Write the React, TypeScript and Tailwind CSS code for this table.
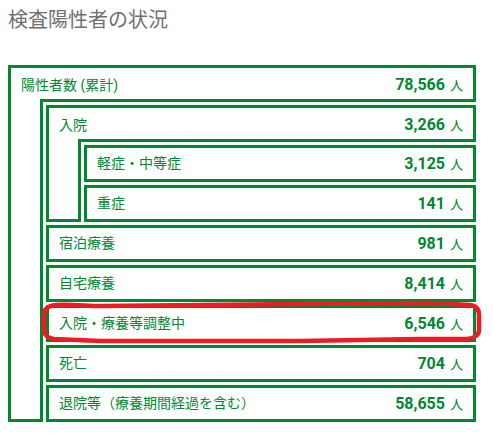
import React from 'react';

const font = { fontFamily: 'Roboto, "Noto Sans CJK JP", sans-serif' };

function Value({ n }: { n: string }) {
  return (
    <span className="flex items-baseline text-[#008830]">
      <strong className="text-[16px] font-bold">{n}</strong>
      <span className="ml-[5px] text-[13px]">人</span>
    </span>
  );
}

function Row({ label, n }: { label: string; n: string }) {
  return (
    <div className="flex h-[37px] items-center justify-between border-[3px] border-[#008830] pl-[10px] pr-[10px]">
      <span className="text-[14px] text-[#008830]">{label}</span>
      <Value n={n} />
    </div>
  );
}

function Group({ label, n, children }: { label: string; n: string; children: React.ReactNode }) {
  return (
    <div>
      <div className="flex h-[34px] items-center justify-between border-[3px] border-b-0 border-[#008830] pl-[10px] pr-[10px] pt-[3px]">
        <span className="text-[14px] text-[#008830]">{label}</span>
        <Value n={n} />
      </div>
      <div className="flex">
        <div className="w-[35px] shrink-0 border-[3px] border-t-0 border-[#008830]" />
        <div className="flex min-w-0 flex-1 flex-col gap-[3px] border-t-[3px] border-[#008830] pl-[3px] pt-[3px]">
          {children}
        </div>
      </div>
    </div>
  );
}

export default function App() {
  return (
    <div className="relative h-[436px] w-[493px] bg-white pl-2" style={font}>
      <h2 className="pt-[5px] text-[20px] leading-[30px] font-normal text-[#707070]">検査陽性者の状況</h2>
      <div className="mt-[30px] w-[468px]">
        <Group label="陽性者数 (累計)" n="78,566">
          <Group label="入院" n="3,266">
            <Row label="軽症・中等症" n="3,125" />
            <Row label="重症" n="141" />
          </Group>
          <Row label="宿泊療養" n="981" />
          <Row label="自宅療養" n="8,414" />
          <Row label="入院・療養等調整中" n="6,546" />
          <Row label="死亡" n="704" />
          <Row label="退院等（療養期間経過を含む）" n="58,655" />
        </Group>
      </div>
      {/* hand-drawn highlight */}
      <svg className="pointer-events-none absolute inset-0" width="493" height="436" viewBox="0 0 493 436">
        <path
          d="M56 305 C70 304 88 306 100 306 L300 304 L432 303 L470 305 Q479 306 479 315 L479 331 Q478 338 466 339 L420 339 L300 341 L100 341 L54 339 Q45 338 44 330 L44 315 Q44 306 56 305 Z"
          fill="none"
          stroke="#ec1c24"
          strokeWidth="4.5"
          strokeLinejoin="round"
        />
      </svg>
    </div>
  );
}
